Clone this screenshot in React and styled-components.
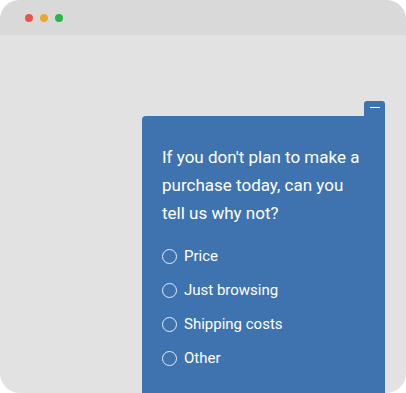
import React from 'react'
import styled, {createGlobalStyle} from "styled-components";

const options = ['Price', 'Just browsing', 'Shipping costs', 'Other']

function App() {
    return (
        <>
            <GlobalStyle/>
            <Window>
                <TitleBar>
                    <Dot color='#ea5549'/>
                    <Dot color='#e9a92e'/>
                    <Dot color='#26b843'/>
                </TitleBar>
                <Body>
                    <Widget>
                        <MinTab><MinLine/></MinTab>
                        <Panel>
                            <Question>If you don't plan to make a purchase today, can you tell us why not?</Question>
                            <OptionList>
                                {options.map((opt) => (
                                    <Option key={opt}>
                                        <Radio/>
                                        {opt}
                                    </Option>
                                ))}
                            </OptionList>
                        </Panel>
                    </Widget>
                </Body>
            </Window>
        </>
    );
}

const GlobalStyle = createGlobalStyle`
    body {
        margin: 0;
        background: #fff;
        font-family: Roboto, "Liberation Sans", sans-serif;
    }
`

const Window = styled.div`
    width: 406px;
    height: 393px;
    border-radius: 20px;
    overflow: hidden;
    background: #e2e2e2;
    display: flex;
    flex-direction: column;
`

const TitleBar = styled.div`
    height: 35px;
    background: #d9d9d9;
    display: flex;
    align-items: center;
    gap: 7px;
    padding-left: 25px;
    flex-shrink: 0;
`

const Dot = styled.span`
    width: 8px;
    height: 8px;
    border-radius: 50%;
    background: ${props => props.color};
`

const Body = styled.div`
    flex: 1;
    display: flex;
    justify-content: flex-end;
    padding: 66px 21px 0 0;
    min-height: 0;
`

const Widget = styled.div`
    width: 243px;
    display: flex;
    flex-direction: column;
    align-items: flex-end;
`

const MinTab = styled.div`
    width: 21px;
    height: 15px;
    background: #3e73b0;
    border-radius: 3px 3px 0 0;
    display: flex;
    justify-content: center;
    padding-top: 6px;
    box-sizing: border-box;
`

const MinLine = styled.div`
    width: 10px;
    height: 1px;
    background: #fff;
`

const Panel = styled.div`
    width: 100%;
    flex: 1;
    background: #3e73b0;
    border-radius: 4px 0 0 0;
    padding: 27px 20px 0 20px;
    box-sizing: border-box;
    color: #fff;
`

const Question = styled.div`
    font-size: 17px;
    line-height: 28px;
`

const OptionList = styled.div`
    margin-top: 12px;
    display: flex;
    flex-direction: column;
`

const Option = styled.div`
    height: 34px;
    display: flex;
    align-items: center;
    gap: 7px;
    font-size: 15px;
`

const Radio = styled.span`
    width: 13px;
    height: 13px;
    border: 1.3px solid #e6edf6;
    border-radius: 50%;
    flex-shrink: 0;
`

export default App;
